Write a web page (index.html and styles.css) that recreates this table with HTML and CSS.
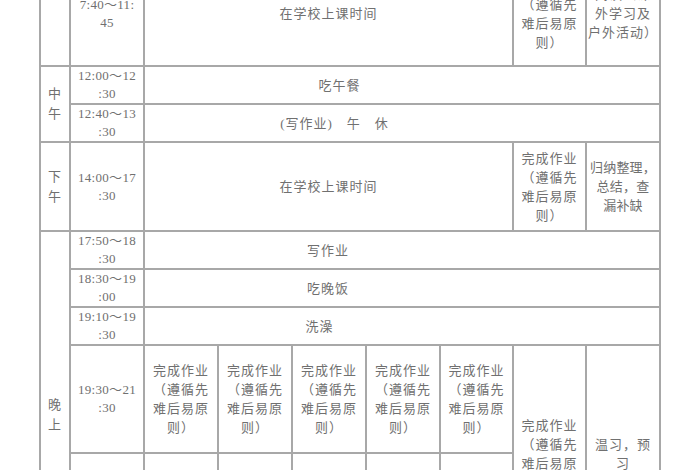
FILE: index.html
```html
<!DOCTYPE html>
<html lang="zh">
<head>
<meta charset="utf-8">
<title>作息时间表</title>
<link rel="stylesheet" href="styles.css">
</head>
<body>
<div class="page">
<table class="schedule">
  <colgroup>
    <col class="c-period"><col class="c-time">
    <col class="c-day"><col class="c-day"><col class="c-day"><col class="c-day"><col class="c-day2">
    <col class="c-day2"><col class="c-extra">
  </colgroup>
  <tbody>
    <tr class="r-morning">
      <td class="period"></td>
      <td class="time">7:40～11:<br>45</td>
      <td colspan="5" class="school">在学校上课时间</td>
      <td class="note">完成作业<br>（遵循先<br>难后易原<br>则）</td>
      <td class="note">阅读（课<br>外学习及<br>户外活动）</td>
    </tr>
    <tr class="r-short">
      <td rowspan="2" class="period">中<br>午</td>
      <td class="time">12:00～12<br>:30</td>
      <td colspan="7" class="span-text t-lunch">吃午餐</td>
    </tr>
    <tr class="r-short">
      <td class="time">12:40～13<br>:30</td>
      <td colspan="7" class="span-text t-nap">(写作业)　午　休</td>
    </tr>
    <tr class="r-afternoon">
      <td class="period">下<br>午</td>
      <td class="time">14:00～17<br>:30</td>
      <td colspan="5" class="school">在学校上课时间</td>
      <td class="note">完成作业<br>（遵循先<br>难后易原<br>则）</td>
      <td class="note tight">归纳整理，<br>总结，查<br>漏补缺</td>
    </tr>
    <tr class="r-short">
      <td rowspan="6" class="period">晚<br>上</td>
      <td class="time">17:50～18<br>:30</td>
      <td colspan="7" class="span-text t-hw">写作业</td>
    </tr>
    <tr class="r-short">
      <td class="time">18:30～19<br>:00</td>
      <td colspan="7" class="span-text t-hw">吃晚饭</td>
    </tr>
    <tr class="r-short">
      <td class="time">19:10～19<br>:30</td>
      <td colspan="7" class="span-text t-bath">洗澡</td>
    </tr>
    <tr class="r-tall">
      <td class="time">19:30～21<br>:30</td>
      <td class="note">完成作业<br>（遵循先<br>难后易原<br>则）</td>
      <td class="note">完成作业<br>（遵循先<br>难后易原<br>则）</td>
      <td class="note">完成作业<br>（遵循先<br>难后易原<br>则）</td>
      <td class="note">完成作业<br>（遵循先<br>难后易原<br>则）</td>
      <td class="note">完成作业<br>（遵循先<br>难后易原<br>则）</td>
      <td rowspan="2" class="note">完成作业<br>（遵循先<br>难后易原<br>则）</td>
      <td rowspan="2" class="note">温习，预<br>习</td>
    </tr>
    <tr class="r-tall2">
      <td class="time">21:30～22<br>:00</td>
      <td class="note">阅读课外<br>书籍</td>
      <td class="note">阅读课外<br>书籍</td>
      <td class="note">阅读课外<br>书籍</td>
      <td class="note">阅读课外<br>书籍</td>
      <td class="note">阅读课外<br>书籍</td>
    </tr>
    <tr class="r-last">
      <td class="time">22:00</td>
      <td colspan="7" class="span-text">睡觉</td>
    </tr>
  </tbody>
</table>
</div>
</body>
</html>
```

FILE: styles.css
```css
html, body {
  margin: 0;
  padding: 0;
  background: #ffffff;
}

.page {
  padding-left: 39px;
  overflow: hidden;
  height: 470px;
}

.schedule {
  margin-top: -40px;
  border-collapse: collapse;
  table-layout: fixed;
  width: 622px;
  font-family: "Liberation Serif", "Noto Sans CJK SC", serif;
  font-size: 13px;
  letter-spacing: 1px;
  line-height: 19px;
  color: #707070;
}

.c-period { width: 30px; }
.c-time { width: 74px; }
.c-day { width: 74px; }
.c-day2 { width: 73px; }
.c-extra { width: 74px; }

.schedule td {
  border: 2px solid #a8a8a8;
  padding: 0;
  text-align: center;
  vertical-align: middle;
  white-space: nowrap;
  overflow: hidden;
}

.r-morning { height: 105px; }
.r-short { height: 38px; }
.r-afternoon { height: 89px; }
.r-tall { height: 108px; }
.r-tall2 { height: 110px; }
.r-last { height: 35px; }

.period {
  line-height: 20px;
}

.time {
  line-height: 18px;
  letter-spacing: 0.3px;
}

.school {
  padding: 0;
}

.span-text {
  padding-right: 147px !important;
}

.t-lunch {
  padding-right: 125px !important;
}

.t-nap {
  padding-right: 135px !important;
}

.t-hw {
  padding-right: 148px !important;
}

.t-bath {
  padding-right: 165px !important;
}

.note {
  line-height: 19px;
}

.tight {
  letter-spacing: 0.2px;
}
```
